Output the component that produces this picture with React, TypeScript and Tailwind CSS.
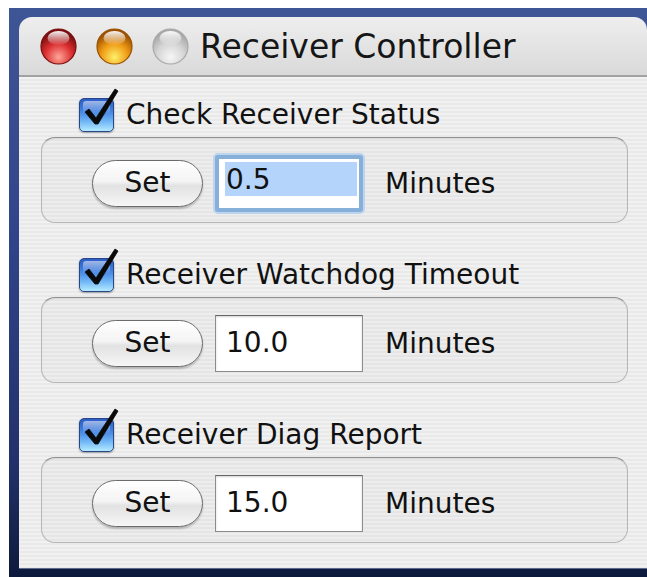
import React from "react";

type Light = { id: string; rim: string; body: string; glow: string };

const lights: Light[] = [
  { id: "red", rim: "#7a0d0d", body: "#dc3032", glow: "#ffa598" },
  { id: "amber", rim: "#9a5000", body: "#ef9a14", glow: "#fff06a" },
  { id: "idle", rim: "#a8a8a8", body: "#d6d6d6", glow: "#f6f6f6" },
];

function TrafficLight({ l }: { l: Light }) {
  return (
    <svg width="37" height="37" viewBox="0 0 37 37" className="shrink-0">
      <defs>
        <radialGradient id={`b-${l.id}`} cx="50%" cy="80%" r="70%">
          <stop offset="0%" stopColor={l.glow} />
          <stop offset="55%" stopColor={l.body} />
          <stop offset="100%" stopColor={l.rim} />
        </radialGradient>
        <linearGradient id={`g-${l.id}`} x1="0" y1="0" x2="0" y2="1">
          <stop offset="0%" stopColor="#ffffff" stopOpacity="0.95" />
          <stop offset="100%" stopColor="#ffffff" stopOpacity="0.05" />
        </linearGradient>
      </defs>
      <circle cx="18.5" cy="18.5" r="17.5" fill={`url(#b-${l.id})`} stroke={l.rim} strokeWidth="1.2" />
      <ellipse cx="18.5" cy="10" rx="11" ry="7" fill={`url(#g-${l.id})`} />
    </svg>
  );
}

function CheckBox() {
  return (
    <div className="relative w-[35px] h-[34px] shrink-0">
      <div className="absolute inset-0 rounded-[5px] border border-[#27478a] bg-[linear-gradient(180deg,#2c5cc4_0%,#3f7fe0_35%,#6fb6f6_70%,#b4eaff_100%)] shadow-[0_1px_2px_rgba(0,0,0,0.35)]">
        <div className="mx-[3px] mt-[2px] h-[12px] rounded-t-[3px] bg-[linear-gradient(180deg,rgba(255,255,255,0.55),rgba(255,255,255,0.05))]" />
      </div>
      <svg
        width="46"
        height="46"
        viewBox="0 -12 46 46"
        className="absolute left-0 top-[-12px] overflow-visible"
      >
        {/* check glyph: short heavy stroke, long thinner stroke rising past the box */}
        <path
          d="M6 14 L10 11 L17 20 L36 -9 L39 -7 L19 26 L16 26 Z"
          fill="#0a0a0a"
          stroke="#0a0a0a"
          strokeWidth="0.8"
          strokeLinejoin="round"
        />
      </svg>
    </div>
  );
}

function SetButton() {
  return (
    <button className="w-[111px] h-[47px] shrink-0 rounded-full border-[1.5px] border-[#6c6c6c] bg-[linear-gradient(180deg,#ffffff_0%,#f4f4f4_45%,#e2e2e2_55%,#f6f6f6_100%)] shadow-[0_2px_2px_rgba(0,0,0,0.22)] text-[28px] leading-none text-[#111]">
      Set
    </button>
  );
}

function Field({ value, focused }: { value: string; focused?: boolean }) {
  if (focused) {
    return (
      <div className="ml-[12px] w-[148px] h-[57px] shrink-0 rounded-[3px] border-[4px] border-[#86b0da] shadow-[0_0_0_2px_#bcd4ee] bg-white pl-[6px] pr-[2px] pt-[3px]">
        <div className="h-[34px] bg-[#b5d4fc] pl-[1px] text-[28px] leading-[36px] text-[#111]">
          {value}
        </div>
      </div>
    );
  }
  return (
    <div className="ml-[12px] w-[148px] h-[57px] shrink-0 border border-[#8c8c8c] border-t-[#666] bg-white shadow-[inset_0_1px_2px_rgba(0,0,0,0.18)] pl-[10px] pt-[10px] text-[28px] leading-[34px] text-[#111]">
      {value}
    </div>
  );
}

function Section({ label, value, focused }: { label: string; value: string; focused?: boolean }) {
  return (
    <div className="flex flex-col">
      <div className="h-[45px] flex items-center pl-[60px] gap-[12px]">
        <CheckBox />
        <span className="text-[28px] leading-none text-[#111]">{label}</span>
      </div>
      <div className="ml-[22px] mr-[19px] h-[86px] rounded-[14px] border border-[#b6b6b6] border-t-[#909090] bg-black/[0.015] shadow-[inset_0_1px_1px_rgba(0,0,0,0.08)] flex items-center pl-[50px] pt-[6px]">
        <SetButton />
        <Field value={value} focused={focused} />
        <span className="ml-[22px] pt-[2px] text-[28px] leading-none text-[#111]">Minutes</span>
      </div>
    </div>
  );
}

export default function App() {
  return (
    <div className="w-[647px] h-[577px] bg-white pt-[8px] pl-[9px] overflow-hidden font-['DejaVu_Sans',sans-serif] antialiased">
      <div className="w-full h-full flex flex-col pt-[9px] pl-[10px] pb-[9px] bg-[linear-gradient(180deg,#3e5596_0%,#31448a_40%,#22316b_80%,#0e1a3c_100%)]">
        <div className="flex-1 flex flex-col rounded-t-[13px] overflow-hidden shadow-[0_1px_0_#5d6a90]">
          <div className="h-[60px] shrink-0 flex items-center pl-[21px] gap-[19px] border-b-2 border-[#a2a2a2] bg-[linear-gradient(180deg,#eeeeee_0%,#e4e4e4_50%,#d9d9d9_100%)]">
            {lights.map((l) => (
              <TrafficLight key={l.id} l={l} />
            ))}
            <span className="-ml-[8px] text-[33px] leading-none text-[#161616]">
              Receiver Controller
            </span>
          </div>
          <div className="flex-1 flex flex-col gap-[29px] pt-[15px] bg-[repeating-linear-gradient(180deg,#f1f1f1_0px,#f1f1f1_2px,#e9e9e9_2px,#e9e9e9_4px)]">
            <Section label="Check Receiver Status" value="0.5" focused />
            <Section label="Receiver Watchdog Timeout" value="10.0" />
            <Section label="Receiver Diag Report" value="15.0" />
          </div>
        </div>
      </div>
    </div>
  );
}
